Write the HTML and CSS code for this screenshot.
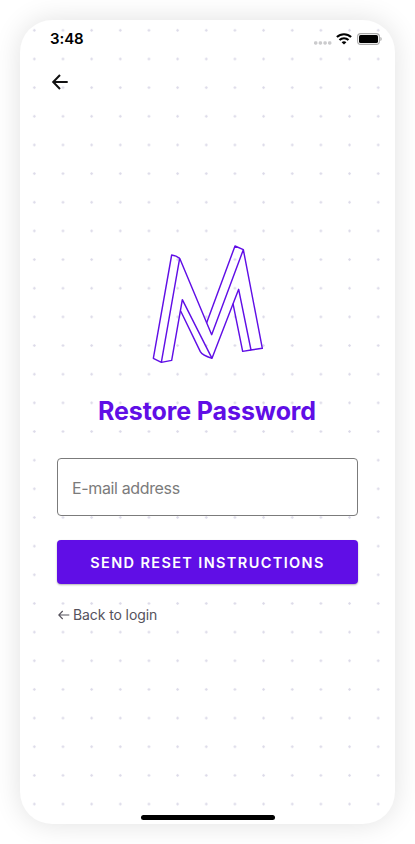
FILE: index.html
```html
<!DOCTYPE html>
<html lang="en">
<head>
<meta charset="utf-8">
<title>Restore Password</title>
<link rel="stylesheet" href="styles.css">
</head>
<body>
<main class="phone">
  <header class="status">
    <span class="time">3:48</span>
    <div class="indicators">
      <svg class="signal" width="18" height="4" viewBox="0 0 18 4" fill="#cbcbcd"><rect x="0" y=".2" width="3.4" height="3.5" rx="1.4"/><rect x="4.7" y=".2" width="3.4" height="3.5" rx="1.4"/><rect x="9.4" y=".2" width="3.4" height="3.5" rx="1.4"/><rect x="14" y=".2" width="3.4" height="3.5" rx="1.4"/></svg>
      <svg class="wifi" width="16" height="12" viewBox="0 0 16 12" fill="none" stroke="#000" stroke-width="2.1"><path d="M.9 4.1C4.9 .2 11.1 .2 15.1 4.1M3.5 7c2.5-2.4 6.5-2.4 9 0"/><path d="M5.6 9.2c1.4-1.2 3.4-1.2 4.8 0L8 11.6z" fill="#000" stroke="none"/></svg>
      <svg class="battery" width="25" height="12" viewBox="0 0 25 12"><rect x=".6" y=".6" width="21.8" height="10.8" rx="3.1" fill="#fff" stroke="#aaa" stroke-width="1.1"/><rect x="2" y="2" width="19" height="8" rx="1.6"/><path d="M23.4 4v4c1.7-.6 1.7-3.4 0-4z" fill="#aaa"/></svg>
    </div>
  </header>
  <nav class="nav">
    <svg width="18" height="18" viewBox="0 0 18 18" fill="none" stroke="#111" stroke-width="2"><path d="M16.7 9H2.4M9 2L2.2 9 9 16"/></svg>
  </nav>
  <section class="content">
    <svg class="logo" width="112" height="120" viewBox="36 27 336 360" fill="none" stroke="#600ee6" stroke-width="4.3" stroke-linejoin="round">
      <path d="M119 70Q109 62 95 60L40 370L64 382L95 376L127 194L216 370L296 163L333 345L367 340L310 44L215 299L119 70L64 382"/>
      <path d="M310 44L285 33L200 263M122 228L181 350Q187 361 216 370M279 206L308 349L333 345"/>
    </svg>
    <h1 class="title">Restore Password</h1>
    <input class="field" type="email" placeholder="E-mail address" aria-label="E-mail address">
    <button class="submit" type="button">SEND RESET INSTRUCTIONS</button>
    <a class="back"><svg width="12" height="10" viewBox="0 0 12 10" fill="none" stroke="#55525c" stroke-width="1.1"><path d="M11.3 5H1M4.7 1L.8 5l3.9 4"/></svg><span>Back to login</span></a>
  </section>
  <div class="home"></div>
</main>
</body>
</html>
```

FILE: styles.css
```css
* { box-sizing: border-box; }
body {
  margin: 0;
  padding: 20px;
  height: 844px;
  overflow: hidden;
  background: #fff;
  font-family: Inter, "Liberation Sans", sans-serif;
}
.phone {
  width: 375px;
  height: 804px;
  border-radius: 32px;
  display: flex;
  flex-direction: column;
  background: radial-gradient(circle at center, #dbd9e8 0.9px, transparent 1.5px) 0 -4px / 28.67px 28.67px #fff;
  box-shadow: 0 0 28px rgba(0, 0, 0, 0.12);
}
.status {
  height: 38px;
  padding: 0 13px 0 30px;
  display: flex;
  align-items: center;
  justify-content: space-between;
}
.time { font-size: 15px; font-weight: 600; line-height: 18px; letter-spacing: -0.1px; }
.indicators { display: flex; align-items: center; }
.signal { margin: 7px 4px 0 0; }
.wifi { margin-right: 5px; }
.nav { height: 48px; padding: 15px 0 0 31px; }
.nav svg { display: block; }
.content {
  flex: 1;
  padding: 138px 37px 0;
  display: flex;
  flex-direction: column;
}
.logo { display: block; margin: 0 0 0 95px; }
.title {
  margin: 30px 0 0;
  height: 34px;
  line-height: 34px;
  color: #600ee6;
  font-size: 25px;
  font-weight: 700;
  letter-spacing: -0.1px;
  text-align: center;
  text-indent: -1px;
  white-space: nowrap;
}
.field {
  width: 301px;
  height: 58px;
  margin-top: 30px;
  padding: 1px 14px 0;
  border: 1px solid #7b7b7b;
  border-radius: 4px;
  background: #fff;
  font: 400 16px Inter, sans-serif;
  letter-spacing: -0.36px;
  outline: 0;
}
.field::placeholder { color: #7b7b7b; opacity: 1; }
.submit {
  width: 301px;
  height: 44px;
  margin-top: 24px;
  padding: 0;
  border: 0;
  border-radius: 4px;
  background: #600ee6;
  color: #fff;
  font: 600 14.5px Inter, sans-serif;
  letter-spacing: 1.37px;
  white-space: nowrap;
  box-shadow: 0 1px 2px rgba(0, 0, 0, 0.3);
}
.back {
  margin: 21px 0 0 1px;
  display: flex;
  align-items: center;
  gap: 3px;
  color: #55525c;
  font-size: 14px;
  line-height: 20px;
  letter-spacing: -0.1px;
}
.home {
  width: 134px;
  height: 5px;
  margin: 0 auto 4px 121px;
  border-radius: 3px;
  background: #000;
}
```
